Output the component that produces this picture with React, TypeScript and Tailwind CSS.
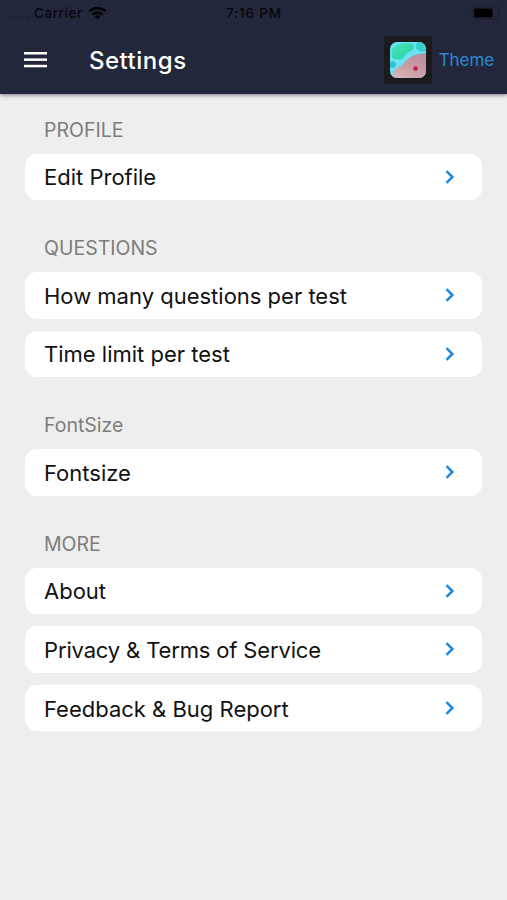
import React from 'react';
import clsx from 'clsx';

interface IItem {
  label: string;
  tight?: boolean;
}

interface ISection {
  title: string;
  items: IItem[];
}

const sections: ISection[] = [
  { title: 'PROFILE', items: [{ label: 'Edit Profile' }] },
  {
    title: 'QUESTIONS',
    items: [{ label: 'How many questions per test' }, { label: 'Time limit per test' }],
  },
  { title: 'FontSize', items: [{ label: 'Fontsize' }] },
  {
    title: 'MORE',
    items: [
      { label: 'About' },
      { label: 'Privacy & Terms of Service', tight: true },
      { label: 'Feedback & Bug Report' },
    ],
  },
];

function StatusBar(): React.ReactElement {
  return (
    <div className="grid h-[26px] grid-cols-3 items-center text-[13px] leading-[26px] font-medium text-[#06070c]">
      <div className="flex items-center pl-2">
        <svg className="h-[26px] w-[26px]" viewBox="0 0 26 26" fill="#1c2031">
          <circle cx="2" cy="17" r="1.3" />
          <circle cx="8" cy="17" r="1.3" />
          <circle cx="14" cy="17" r="1.3" />
          <circle cx="20" cy="17" r="1.3" />
        </svg>
        <span className="text-[13.5px] tracking-[0.55px]">Carrier</span>
        <svg className="ml-[5px] h-[14px] w-[19px]" viewBox="0 0 18 14" fill="none" stroke="#020306" strokeWidth="2.6">
          <path d="M1 5.2a11.6 11.6 0 0 1 16 0" />
          <path d="M4 8.6a7.3 7.3 0 0 1 10 0" />
          <path d="M9 13.2 6.2 10.5a4 4 0 0 1 5.6 0z" fill="#020306" stroke="none" />
        </svg>
      </div>
      <span className="pl-px text-center text-[13.5px] tracking-[0.85px]">7:16 PM</span>
      <svg className="mr-[4px] h-[16px] w-[32px] justify-self-end" viewBox="0 0 32 16">
        <rect x="1.5" y="1.5" width="26" height="13" rx="4" fill="none" stroke="#1b1f2e" strokeWidth="1.2" />
        <rect x="3" y="3.5" width="18.5" height="9" rx="1.5" fill="#000" />
        <path d="M29.5 6v4q2-2 0-4" fill="#191c2a" />
      </svg>
    </div>
  );
}

function ThemeIcon(): React.ReactElement {
  return (
    <div className="flex h-12 w-12 items-center justify-center bg-[#1b1b1e]">
      <svg className="h-[36px] w-[36px]" viewBox="0 0 36 36">
        <defs>
          <clipPath id="tile">
            <rect width="36" height="36" rx="7" />
          </clipPath>
          <linearGradient id="sand" x1="1" y1="0" x2="0.3" y2="1">
            <stop offset="0" stopColor="#b38e9c" />
            <stop offset="0.5" stopColor="#c898a3" />
            <stop offset="1" stopColor="#d2b3b8" />
          </linearGradient>
          <linearGradient id="leaf" x1="0" y1="0" x2="1" y2="1">
            <stop offset="0" stopColor="#48e3bd" />
            <stop offset="1" stopColor="#27d3a2" />
          </linearGradient>
        </defs>
        <g clipPath="url(#tile)">
          <rect width="36" height="36" fill="#6ce3f2" />
          <path d="M36 11.5C29 11.5 22 13 18 17C14 21 13 23 9 25C5 27 3 30 1 36H36z" fill="url(#sand)" />
          <path d="M1.5 11C2 4 8 1.5 14 1.5C19 1 24 1 24 5C24 9 19 9 17 11C14 15 13 17.5 8 17.5C3 18 1 15 1.5 11z" fill="url(#leaf)" />
          <path d="M26.5 0H36V9C32 11 26 9 26 5z" fill="#35d2cd" />
          <circle cx="2.5" cy="22.5" r="3.2" fill="#35bfd0" />
          <circle cx="25.5" cy="26.5" r="2.2" fill="#d01350" />
        </g>
      </svg>
    </div>
  );
}

function Header(): React.ReactElement {
  return (
    <header className="relative h-[94px] bg-[#22273b] shadow-[0_1px_4px_rgba(0,0,0,0.5)]">
      <StatusBar />
      <div className="flex h-[67px] items-center pr-[13px] pl-6">
        <svg className="h-[18px] w-[23px]" viewBox="0 0 23 18" fill="#fff">
          <rect y="1" width="23" height="2.5" />
          <rect y="7.4" width="23" height="2.5" />
          <rect y="13.8" width="23" height="2.5" />
        </svg>
        <h1 className="ml-[42px] pt-[2px] text-[24px] font-medium tracking-[0.5px] text-white">Settings</h1>
        <div className="ml-auto flex items-center gap-[7px]">
          <ThemeIcon />
          <span className="pt-[2px] text-[17px] tracking-[-0.1px] text-[#2b87d3]">Theme</span>
        </div>
      </div>
    </header>
  );
}

function SettingsRow({ label, tight }: IItem): React.ReactElement {
  return (
    <button type="button" className="flex h-[46.6px] w-full items-center justify-between rounded-[12px] bg-white pr-[27px] pl-[19px] text-left">
      <span className={clsx('pt-[2px] text-[22px] text-[#111]', tight && 'tracking-[-0.15px]')}>{label}</span>
      <svg className="h-[14px] w-[10px]" viewBox="0 0 10 14" fill="none" stroke="#2488d8" strokeWidth="2.5">
        <path d="M1.5 1.2 7.4 7l-5.9 5.8" />
      </svg>
    </button>
  );
}

export default function App(): React.ReactElement {
  return (
    <div className="min-h-screen bg-[#eee] font-['Inter',sans-serif]">
      <Header />
      <main className="px-[25px]">
        {sections.map((section) => (
          <section key={section.title} className="pb-[12.4px]">
            <h2 className="flex h-[59.5px] items-end pb-[10.6px] pl-[19px] text-[19.5px] leading-[26px] text-[#7d7d7d]">
              {section.title}
            </h2>
            <div className="flex flex-col gap-3">
              {section.items.map((item) => <SettingsRow key={item.label} {...item} />)}
            </div>
          </section>
        ))}
      </main>
    </div>
  );
}
